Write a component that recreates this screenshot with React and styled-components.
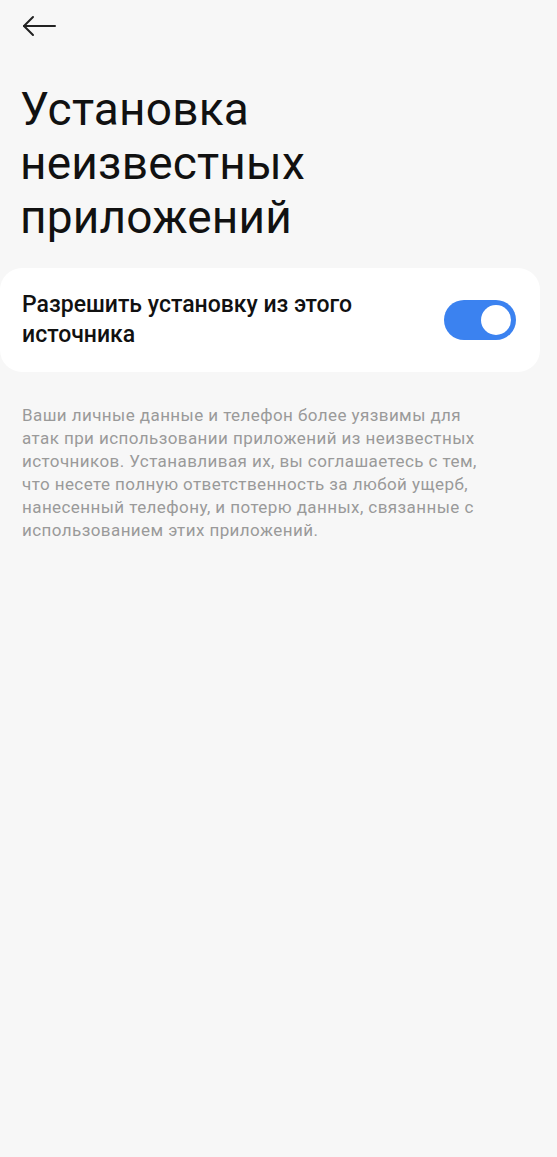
import React from 'react'
import styled, { createGlobalStyle } from 'styled-components'

const Global = createGlobalStyle`
  html, body { margin: 0; padding: 0; background: #f7f7f7; }
  body { font-family: Roboto, "Noto Sans", sans-serif; }
`

const Page = styled.div`
  min-height: 1157px;
  background: #f7f7f7;
  display: flex;
  flex-direction: column;
`

const TopBar = styled.div`
  height: 52px;
  padding: 0 0 0 22px;
  display: flex;
  align-items: center;
`

const BackButton = styled.button`
  border: none;
  background: none;
  padding: 0;
  width: 36px;
  height: 28px;
  display: flex;
  align-items: center;
  color: #222;
`

const Title = styled.h1`
  margin: 30px 0 0 20px;
  max-width: 330px;
  font-size: 46px;
  line-height: 54px;
  font-weight: 400;
  color: #111;
  letter-spacing: 0.2px;
`

const Card = styled.div`
  margin: 24px 17px 0 0;
  background: #fff;
  border-radius: 22px;
  padding: 22px 24px 22px 22px;
  display: flex;
  align-items: center;
  justify-content: space-between;
`

const CardLabel = styled.div`
  font-size: 23px;
  line-height: 30px;
  color: #111;
  font-weight: 500;
  max-width: 380px;
`

const Switch = styled.div`
  width: 72px;
  height: 40px;
  border-radius: 20px;
  background: ${p => (p.on ? '#3b82f0' : '#ccc')};
  position: relative;
  flex-shrink: 0;
`

const Knob = styled.span`
  position: absolute;
  top: 5px;
  left: ${p => (p.on ? '37px' : '5px')};
  width: 30px;
  height: 30px;
  border-radius: 50%;
  background: #fff;
`

const Note = styled.p`
  margin: 32px 20px 0 22px;
  font-size: 17px;
  line-height: 23px;
  letter-spacing: 0.42px;
  color: #9a9a9a;
  white-space: nowrap;
`

export default function App() {
  return (
    <Page>
      <Global />
      <TopBar>
        <BackButton aria-label="Назад">
          <svg width="34" height="22" viewBox="0 0 34 22" fill="none" stroke="currentColor" strokeWidth="2" strokeLinecap="round" strokeLinejoin="round">
            <path d="M33 11H2" />
            <path d="M11 2L2 11l9 9" />
          </svg>
        </BackButton>
      </TopBar>
      <Title>Установка неизвестных приложений</Title>
      <Card>
        <CardLabel>Разрешить установку из этого источника</CardLabel>
        <Switch on>
          <Knob on />
        </Switch>
      </Card>
      <Note>
        Ваши личные данные и телефон более уязвимы для<br />
        атак при использовании приложений из неизвестных<br />
        источников. Устанавливая их, вы соглашаетесь с тем,<br />
        что несете полную ответственность за любой ущерб,<br />
        нанесенный телефону, и потерю данных, связанные с<br />
        использованием этих приложений.
      </Note>
    </Page>
  )
}
